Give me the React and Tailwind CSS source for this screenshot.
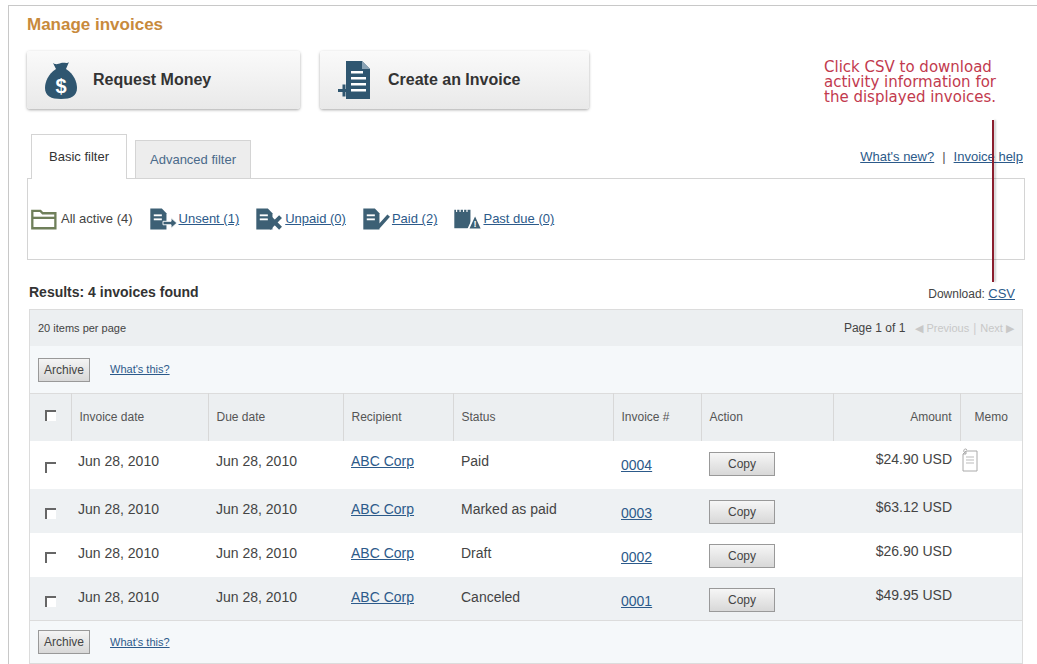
import React from "react";

const F = { fontFamily: '"Liberation Sans", Arial, sans-serif' };

function Bag() {
  return (
    <svg width="36" height="40" viewBox="0 0 36 40">
      <path d="M10 3c3 2 5 1 8 0s6 1 8 -1l-3 7h-10z" fill="#2f5670" />
      <path d="M13 9c-8 5-11 13-11 19 0 8 6 11 16 11s16-3 16-11c0-6-3-14-11-19z" fill="#2f5670" />
      <text x="18" y="33" textAnchor="middle" fill="#fff" fontSize="20" fontWeight="bold" fontFamily="Liberation Sans">$</text>
    </svg>
  );
}
function DocPlus() {
  return (
    <svg width="38" height="42" viewBox="0 0 38 42">
      <path d="M10 2h16l8 8v30H10z" fill="#2f5670" />
      <path d="M26 2v8h8" fill="#8aa3b5" />
      <rect x="15" y="12" width="12" height="2.5" fill="#fff" />
      <rect x="15" y="18" width="15" height="2.5" fill="#fff" />
      <rect x="15" y="24" width="15" height="2.5" fill="#fff" />
      <rect x="15" y="30" width="15" height="2.5" fill="#fff" />
      <rect x="2" y="30" width="12" height="3" fill="#2f5670" />
      <rect x="6.5" y="25.5" width="3" height="12" fill="#2f5670" />
    </svg>
  );
}
function SmallIcon({ kind }) {
  const c = "#3d6075";
  return (
    <svg width="30" height="26" viewBox="0 0 26 22" className="shrink-0">
      {kind === "folder" ? (
        <g fill="none" stroke="#6f7f5a" strokeWidth="2">
          <path d="M2 4h7l2 2h11v13H2z" />
          <path d="M2 10h20" />
        </g>
      ) : kind === "cal" ? (
        <g>
          <rect x="2" y="3" width="14" height="16" fill={c} />
          <path d="M4 2v3M7 2v3M10 2v3M13 2v3" stroke="#fff" strokeWidth="1" />
          <path d="M14 20l6-13 6 13z" fill={c} stroke="#fff" strokeWidth="1.5" />
          <text x="20" y="18" textAnchor="middle" fill="#fff" fontSize="8" fontWeight="bold">!</text>
        </g>
      ) : (
        <g>
          <path d="M2 2h10l4 4v14H2z" fill={c} />
          <rect x="5" y="7" width="7" height="1.6" fill="#fff" />
          <rect x="5" y="10.5" width="7" height="1.6" fill="#fff" />
          {kind === "unsent" && <path d="M13 13h7v-3l5 4.5-5 4.5v-3h-7z" fill={c} stroke="#fff" strokeWidth="0.8" />}
          {kind === "unpaid" && <path d="M13 9l10 10M23 9L13 19" stroke={c} strokeWidth="3.5" />}
          {kind === "paid" && <path d="M12 13l4 4 8-9" stroke={c} strokeWidth="3" fill="none" />}
        </g>
      )}
    </svg>
  );
}
function Memo() {
  return (
    <svg width="20" height="26" viewBox="0 0 20 26">
      <path d="M6 4h11v20H3V7z" fill="#fff" stroke="#aaa" />
      <path d="M3 7l3-3v3z" fill="#ddd" stroke="#aaa" />
      <path d="M6 10h8M6 13h8M6 16h8" stroke="#bbb" />
      <path d="M4 5c-1-3 2-4 3-2" stroke="#aaa" fill="none" />
    </svg>
  );
}
function Cb() {
  return <span className="inline-block w-[11px] h-[11px] border-l-2 border-t-2 border-[#666] bg-white" />;
}
function GrayBtn({ children }) {
  return (
    <span className="inline-block border border-[#999] bg-gradient-to-b from-[#f4f4f4] to-[#d8d8d8] px-[5px] py-[2px] text-[12px] text-[#444]">{children}</span>
  );
}

const rows = [
  ["Paid", "0004", "$24.90 USD", true],
  ["Marked as paid", "0003", "$63.12 USD", false],
  ["Draft", "0002", "$26.90 USD", false],
  ["Canceled", "0001", "$49.95 USD", false],
];
const link = "text-[#2c5a8a] underline";

export default function App() {
  return (
    <div style={F} className="w-[1037px] h-[664px] bg-white overflow-hidden pl-[8px] pt-[5px] relative">
      <div className="border-l border-t border-[#c8c8c8] h-full pl-[18px] pr-[12px] pt-[8px]">
        <div className="text-[17px] font-bold text-[#c88a3c] leading-[22px]">Manage invoices</div>
        <div className="flex gap-[20px] mt-[15px] h-[58px]">
          {[["Request Money", <Bag />], ["Create an Invoice", <DocPlus />]].map(([t, ic], i) => (
            <div key={t} className={`${i ? "w-[269px]" : "w-[273px]"} flex items-center gap-[14px] px-[16px] rounded-[3px] bg-gradient-to-b from-[#fafafa] to-[#e9e9e9] shadow-[0_1px_3px_rgba(0,0,0,0.35)]`}>
              {ic}
              <span className="text-[16px] font-bold text-[#333]">{t}</span>
            </div>
          ))}
        </div>
        <div className="flex items-end mt-[24px] relative">
          <div className="ml-[4px] w-[96px] h-[45px] border border-b-0 border-[#d4d4d4] bg-white flex items-center justify-center text-[13px] text-[#333] relative top-[1px]">Basic filter</div>
          <div className="ml-[8px] w-[116px] h-[38px] border border-b-0 border-[#d4d4d4] bg-[#ededed] flex items-center justify-center text-[13px] text-[#4a6a8a]">Advanced filter</div>
          <div className="ml-auto mb-[12px] text-[13px] flex items-center gap-[8px] mr-[2px]">
            <span className={link}>What's new?</span>
            <span className="text-[#555]">|</span>
            <span className={link}>Invoice help</span>
          </div>
        </div>
        <div className="border border-[#d4d4d4] h-[82px] flex items-center gap-[15px] pl-[2px] text-[13px]">
          <span className="flex items-center gap-[1px] text-[#444]"><SmallIcon kind="folder" />All active (4)</span>
          <span className="flex items-center gap-[1px]"><SmallIcon kind="unsent" /><span className={link}>Unsent (1)</span></span>
          <span className="flex items-center gap-[1px]"><SmallIcon kind="unpaid" /><span className={link}>Unpaid (0)</span></span>
          <span className="flex items-center gap-[1px]"><SmallIcon kind="paid" /><span className={link}>Paid (2)</span></span>
          <span className="flex items-center gap-[1px]"><SmallIcon kind="cal" /><span className={link}>Past due (0)</span></span>
        </div>
        <div className="flex items-end justify-between mt-[22px] mb-[6px] pl-[2px] pr-[10px]">
          <span className="text-[14px] font-bold text-[#333]">Results: 4 invoices found</span>
          <span className="text-[12px] text-[#444]">Download: <span className={link + " text-[13px]"}>CSV</span></span>
        </div>
        <div className="ml-[2px] mr-[2px] border border-[#dcdcdc] bg-[#f5f8fa]">
          <div className="h-[36px] bg-[#eceff1] flex items-center justify-between px-[8px] text-[11px] text-[#444]">
            <span>20 items per page</span>
            <span className="flex items-center gap-[4px] text-[12px]">Page 1 of 1
              <span className="ml-[6px] text-[#c8c8c8] text-[11px]">◀ Previous</span>
              <span className="text-[#ccc]">|</span>
              <span className="text-[#c8c8c8] text-[11px]">Next ▶</span>
            </span>
          </div>
          <div className="h-[47px] flex items-center gap-[20px] px-[8px]">
            <GrayBtn>Archive</GrayBtn>
            <span className={link + " text-[11px]"}>What's this?</span>
          </div>
          <table className="w-full border-collapse table-fixed text-[14px] text-[#444]">
            <colgroup>
              <col className="w-[41px]" /><col className="w-[137px]" /><col className="w-[135px]" /><col className="w-[110px]" />
              <col className="w-[160px]" /><col className="w-[88px]" /><col className="w-[132px]" /><col className="w-[127px]" /><col />
            </colgroup>
            <thead>
              <tr className="h-[47px] bg-[#eceff1] text-[12px] text-[#555] border-t border-[#dcdcdc]">
                <th className="font-normal text-center align-middle"><Cb /></th>
                {["Invoice date", "Due date", "Recipient", "Status", "Invoice #", "Action"].map((h) => (
                  <th key={h} className="font-normal text-left pl-[8px] border-l border-[#d8d8d8]">{h}</th>
                ))}
                <th className="font-normal text-right pr-[8px] border-l border-[#d8d8d8]">Amount</th>
                <th className="font-normal text-center border-l border-[#d8d8d8]">Memo</th>
              </tr>
            </thead>
            <tbody>
              {rows.map(([st, no, amt, memo], i) => (
                <tr key={no} className={`${i === 0 ? "h-[48px]" : "h-[44px]"} ${i % 2 ? "bg-[#eef1f3]" : "bg-white"} ${i === 3 ? "border-b border-[#dcdcdc]" : ""}`}>
                  <td className="text-center pt-[8px]"><Cb /></td>
                  <td className="pl-[7px] align-top pt-[10px]">Jun 28, 2010</td>
                  <td className="pl-[8px] align-top pt-[10px]">Jun 28, 2010</td>
                  <td className="pl-[8px] align-top pt-[10px]"><span className={link}>ABC Corp</span></td>
                  <td className="pl-[8px] align-top pt-[10px]">{st}</td>
                  <td className="pl-[8px] align-top pt-[14px]"><span className={link}>{no}</span></td>
                  <td className="pl-[8px] align-top pt-[11px]"><span className="inline-block w-[66px] text-center border border-[#999] bg-gradient-to-b from-[#f6f6f6] to-[#d8d8d8] text-[12px] text-[#444] py-[2px]">Copy</span></td>
                  <td className="text-right pr-[8px] align-top pt-[8px]">{amt}</td>
                  <td className="text-center align-top pt-[6px]">{memo && <Memo />}</td>
                </tr>
              ))}
            </tbody>
          </table>
          <div className="h-[42px] flex items-center gap-[20px] px-[8px]">
            <GrayBtn>Archive</GrayBtn>
            <span className={link + " text-[11px]"}>What's this?</span>
          </div>
        </div>
      </div>
      <div className="absolute left-[824px] top-[60px] text-[15px] leading-[15px] text-[#c23a4e]" style={{ fontFamily: '"DejaVu Sans", Verdana, sans-serif' }}>
        Click CSV to download<br />activity information for<br />the displayed invoices.
      </div>
      <div className="absolute left-[992px] top-[120px] w-[2px] h-[162px] bg-[#8b1e2e] shadow-[2px_0_2px_rgba(0,0,0,0.2)]" />
    </div>
  );
}
